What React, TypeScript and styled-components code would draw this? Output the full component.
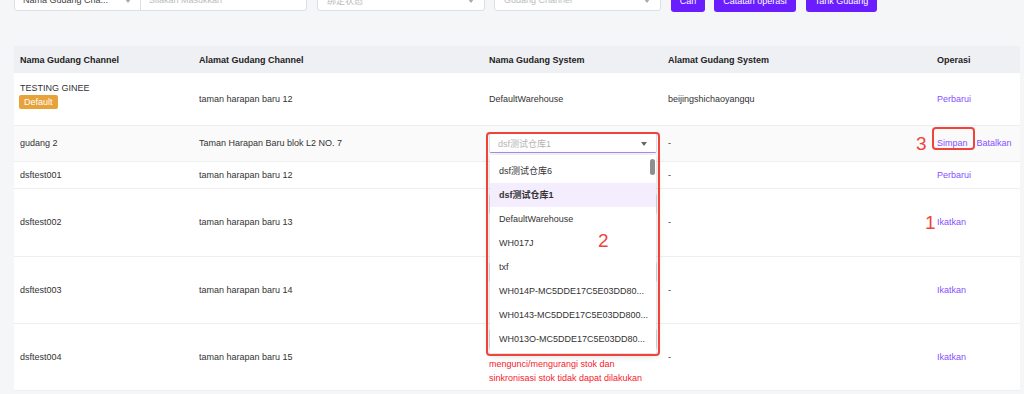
import React from 'react'
import styled, { createGlobalStyle } from 'styled-components'

const GlobalStyle = createGlobalStyle`
  html, body {
    margin: 0;
    padding: 0;
    background: #f5f6f8;
    font-family: "Liberation Sans", "Noto Sans CJK SC", sans-serif;
    font-size: 9px;
    color: #333;
    overflow: hidden;
  }
`

const Page = styled.div`
  padding: 0 4px 0 14px;
`

const FilterBar = styled.div`
  display: flex;
  align-items: flex-end;
  margin-top: -12px;
  height: 23px;
`

const Combo = styled.div`
  display: flex;
  width: 293px;
  height: 22px;
  background: #fff;
  border: 1px solid #dcdfe6;
  border-radius: 3px;
  box-sizing: border-box;
`

const ComboSelect = styled.div`
  position: relative;
  width: 117px;
  border-right: 1px solid #dcdfe6;
  display: flex;
  align-items: center;
  padding-left: 8px;
  color: #444;
`

const Caret = styled.span<{ $right: number; $dark?: boolean }>`
  position: absolute;
  right: ${(p) => p.$right}px;
  top: 50%;
  margin-top: -1px;
  border-left: 3px solid transparent;
  border-right: 3px solid transparent;
  border-top: 4px solid ${(p) => (p.$dark ? '#666' : '#aaa')};
`

const ComboInput = styled.div`
  flex: 1;
  display: flex;
  align-items: center;
  padding-left: 8px;
  color: #bbb;
`

const SelectBox = styled.div<{ $w: number; $ml: number }>`
  position: relative;
  width: ${(p) => p.$w}px;
  margin-left: ${(p) => p.$ml}px;
  height: 22px;
  box-sizing: border-box;
  background: #fff;
  border: 1px solid #dcdfe6;
  border-radius: 3px;
  display: flex;
  align-items: center;
  padding-left: 9px;
  color: #bbb;
`

const Button = styled.button<{ $w: number; $ml: number }>`
  width: ${(p) => p.$w}px;
  margin-left: ${(p) => p.$ml}px;
  height: 23px;
  border: none;
  border-radius: 3px;
  background: #6a1dff;
  color: #fff;
  font-family: inherit;
  font-size: 9px;
  padding: 0;
  margin-bottom: -1px;
`

const Table = styled.table`
  margin-top: 35px;
  width: 1006px;
  border-collapse: collapse;
  table-layout: fixed;
  background: #fff;
`

const Th = styled.th`
  height: 27px;
  padding: 0 6px;
  background: #eff0f3;
  text-align: left;
  font-weight: bold;
  color: #222;
  font-size: 9px;
`

const Tr = styled.tr<{ $bg?: string }>`
  background: ${(p) => p.$bg || '#fff'};
  border-bottom: 1px solid #efefef;
`

const Td = styled.td<{ $h: number }>`
  height: ${(p) => p.$h}px;
  box-sizing: border-box;
  padding: 0 6px;
  vertical-align: middle;
  position: relative;
`

const Badge = styled.span`
  display: inline-block;
  margin-top: 2px;
  background: #e8a23a;
  color: #fff;
  border-radius: 2px;
  padding: 0 5px;
  height: 14px;
  line-height: 14px;
  margin-left: -1px;
`

const NameStack = styled.div`
  margin-top: -5px;
`

const Ops = styled.div`
  position: relative;
  display: flex;
  gap: 9px;
`

const Link = styled.span`
  color: #8650ff;
`

const Mark = styled.span<{ $left: number; $top?: number }>`
  position: absolute;
  left: ${(p) => p.$left}px;
  top: ${(p) => (p.$top ?? 50)}%;
  transform: translateY(-50%);
  color: #f0443a;
  font-size: 19px;
  line-height: 1;
`

const Highlight = styled.div<{ $l: number; $t: number; $w: number; $h: number }>`
  position: absolute;
  left: ${(p) => p.$l}px;
  top: ${(p) => p.$t}px;
  width: ${(p) => p.$w}px;
  height: ${(p) => p.$h}px;
  border: 2.5px solid #f0443a;
  border-radius: 4px;
  box-sizing: border-box;
  z-index: 5;
  pointer-events: none;
`

const Picker = styled.div`
  position: relative;
  width: 168px;
  height: 20px;
  box-sizing: border-box;
  background: #fff;
  border: 1px solid #dcdfe6;
  border-bottom-color: #a98bf5;
  border-radius: 2px;
  display: flex;
  align-items: center;
  padding-left: 8px;
  color: #b5b5b5;
`

const Dropdown = styled.div`
  position: absolute;
  left: 0;
  top: 21px;
  width: 166px;
  height: 198px;
  padding-top: 4px;
  box-sizing: border-box;
  background: #fff;
  box-shadow: 0 2px 8px rgba(0, 0, 0, 0.18);
  z-index: 4;
  overflow: hidden;
`

const Option = styled.div<{ $active?: boolean }>`
  height: 24px;
  line-height: 24px;
  padding-left: 9px;
  color: #333;
  font-weight: ${(p) => (p.$active ? 'bold' : 'normal')};
  background: ${(p) => (p.$active ? '#f4edfd' : 'transparent')};
  white-space: nowrap;
`

const Scroll = styled.div`
  position: absolute;
  right: 1px;
  top: 4px;
  width: 5px;
  height: 16px;
  border-radius: 3px;
  background: #8f8f8f;
`

const Warning = styled.div`
  margin-top: 8px;
  color: #f5222d;
  line-height: 14px;
`

const options = [
  'dsf测试仓库6',
  'dsf测试仓库1',
  'DefaultWarehouse',
  'WH017J',
  'txf',
  'WH014P-MC5DDE17C5E03DD80...',
  'WH0143-MC5DDE17C5E03DD800...',
  'WH013O-MC5DDE17C5E03DD80...',
]

// rows 4 and 5 sit under the open dropdown, only row 6 shows its warning
const unbound = [
  { name: 'dsftest002', addr: 'taman harapan baru 13', h: 68, mark: true, warn: false },
  { name: 'dsftest003', addr: 'taman harapan baru 14', h: 67, mark: false, warn: false },
  { name: 'dsftest004', addr: 'taman harapan baru 15', h: 67, mark: false, warn: true },
]

const UnboundPicker = ({ warn }: { warn: boolean }) => (
  <>
    <Picker>
      <Caret $right={8} $dark />
    </Picker>
    {warn ? (
      <Warning>
        mengunci/mengurangi stok dan
        <br />
        sinkronisasi stok tidak dapat dilakukan
      </Warning>
    ) : (
      <Warning>&nbsp;<br />&nbsp;</Warning>
    )}
  </>
)

export default function App() {
  return (
    <Page>
      <GlobalStyle />
      <FilterBar>
        <Combo>
          <ComboSelect>
            Nama Gudang Cha...
            <Caret $right={9} />
          </ComboSelect>
          <ComboInput>Silakan Masukkan</ComboInput>
        </Combo>
        <SelectBox $w={168} $ml={10}>
          绑定状态
          <Caret $right={10} />
        </SelectBox>
        <SelectBox $w={167} $ml={9}>
          Gudang Channel
          <Caret $right={10} />
        </SelectBox>
        <Button $w={34} $ml={10}>Cari</Button>
        <Button $w={82} $ml={9}>Catatan operasi</Button>
        <Button $w={71} $ml={10}>Tarik Gudang</Button>
      </FilterBar>

      <Table>
        <colgroup>
          <col style={{ width: 179 }} />
          <col style={{ width: 290 }} />
          <col style={{ width: 179 }} />
          <col style={{ width: 269 }} />
          <col style={{ width: 89 }} />
        </colgroup>
        <thead>
          <tr>
            <Th>Nama Gudang Channel</Th>
            <Th>Alamat Gudang Channel</Th>
            <Th>Nama Gudang System</Th>
            <Th>Alamat Gudang System</Th>
            <Th>Operasi</Th>
          </tr>
        </thead>
        <tbody>
          <Tr>
            <Td $h={52}>
              <NameStack>
                <div>TESTING GINEE</div>
                <Badge>Default</Badge>
              </NameStack>
            </Td>
            <Td $h={52}>taman harapan baru 12</Td>
            <Td $h={52}>DefaultWarehouse</Td>
            <Td $h={52}>beijingshichaoyangqu</Td>
            <Td $h={52}>
              <Ops>
                <Link>Perbarui</Link>
              </Ops>
            </Td>
          </Tr>
          <Tr $bg="#fafafa">
            <Td $h={36}>gudang 2</Td>
            <Td $h={36}>Taman Harapan Baru blok L2 NO. 7</Td>
            <Td $h={36}>
              <Picker>
                dsf测试仓库1
                <Caret $right={9} $dark />
                <Dropdown>
                  {options.map((o) => (
                    <Option key={o} $active={o === 'dsf测试仓库1'}>
                      {o}
                    </Option>
                  ))}
                  <Scroll />
                </Dropdown>
                <Highlight $l={-4} $t={-2} $w={174} $h={224}>
                  <Mark $left={110} $top={48}>2</Mark>
                </Highlight>
              </Picker>
            </Td>
            <Td $h={36}>-</Td>
            <Td $h={36}>
              <Ops>
                <Link>Simpan</Link>
                <Link>Batalkan</Link>
                <Mark $left={-21}>3</Mark>
                <Highlight $l={-5} $t={-11} $w={43} $h={23} />
              </Ops>
            </Td>
          </Tr>
          <Tr>
            <Td $h={27}>dsftest001</Td>
            <Td $h={27}>taman harapan baru 12</Td>
            <Td $h={27} />
            <Td $h={27}>-</Td>
            <Td $h={27}>
              <Ops>
                <Link>Perbarui</Link>
              </Ops>
            </Td>
          </Tr>
          {unbound.map((r) => (
            <Tr key={r.name}>
              <Td $h={r.h}>{r.name}</Td>
              <Td $h={r.h}>{r.addr}</Td>
              <Td $h={r.h}>
                <UnboundPicker warn={r.warn} />
              </Td>
              <Td $h={r.h}>-</Td>
              <Td $h={r.h}>
                <Ops>
                  {r.mark && <Mark $left={-12}>1</Mark>}
                  <Link>Ikatkan</Link>
                </Ops>
              </Td>
            </Tr>
          ))}
        </tbody>
      </Table>
    </Page>
  )
}
